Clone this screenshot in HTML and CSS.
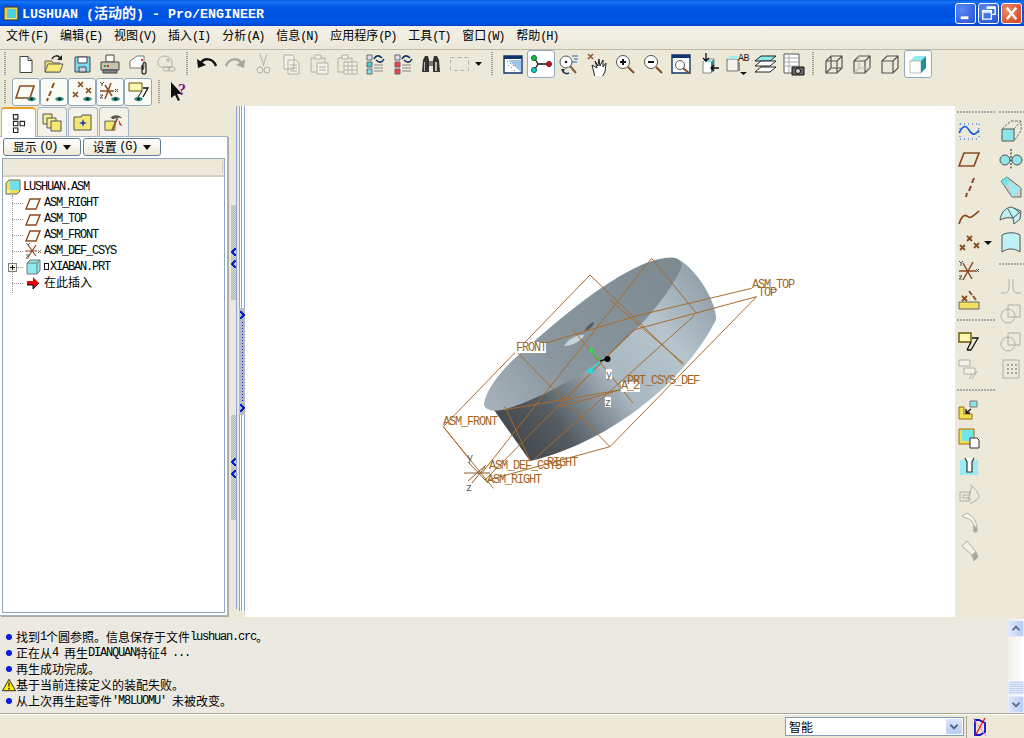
FILE: index.html
```html
<!DOCTYPE html>
<html lang="zh">
<head>
<meta charset="utf-8">
<title>LUSHUAN (活动的) - Pro/ENGINEER</title>
<link rel="stylesheet" href="styles.css">
</head>
<body>
<div class="app">
  <header class="title">
    <svg class="ti" viewBox="0 0 16 16"><path d="M1 2h14v13H1z" fill="#e8d24a" stroke="#333"/><path d="M4 4h9v9H4z" fill="#4fd0e0"/><path d="M2 13h10v1H2z" fill="#f3e88a"/></svg>
    <span class="tt"><b class="tl">LUSHUAN (</b>活动的<b class="tl">) - Pro/ENGINEER</b></span>
    <span class="wb">
      <span class="wbtn"><svg viewBox="0 0 20 20"><path d="M5 13h8v3H5z" fill="#fff"/></svg></span>
      <span class="wbtn"><svg viewBox="0 0 20 20"><path d="M8 3h9v8h-3M4 7h9v9H4zM4 8.5h9M8 4.5h9" fill="none" stroke="#fff" stroke-width="1.4"/></svg></span>
      <span class="wbtn close"><svg viewBox="0 0 20 20"><path d="M5 4l10 12M15 4L5 16" stroke="#fff" stroke-width="2.6"/></svg></span>
    </span>
  </header>
  <nav class="menu">
    <span class="mi">文件<i>(F)</i></span><span class="mi">编辑<i>(E)</i></span><span class="mi">视图<i>(V)</i></span><span class="mi">插入<i>(I)</i></span><span class="mi">分析<i>(A)</i></span><span class="mi">信息<i>(N)</i></span><span class="mi">应用程序<i>(P)</i></span><span class="mi">工具<i>(T)</i></span><span class="mi">窗口<i>(W)</i></span><span class="mi">帮助<i>(H)</i></span>
  </nav>

  <div class="tb tb1">
    <span class="grip g1"></span>
    <span class="b"><svg viewBox="0 0 24 24"><path d="M6 4.500h8l4 4v12H6z" fill="#fff" stroke="#444"/><path d="M14 4.500v4h4" fill="none" stroke="#444"/></svg></span>
    <span class="b"><svg viewBox="0 0 24 24"><path d="M3 9h7l1 2h7v9H3z" fill="#e8d86a" stroke="#666"/><path d="M3 20l3-8h15l-3 8z" fill="#f8e878" stroke="#666"/><path d="M10 7c2-4 6-4 8-1" fill="none" stroke="#222" stroke-width="1.5"/><path d="M20 3v5h-5z" fill="#222"/></svg></span>
    <span class="b"><svg viewBox="0 0 24 24"><path d="M5 5h15v15H5z" fill="#7fdcec" stroke="#445"/><path d="M8 5h9v6H8z" fill="#fff" stroke="#445"/><path d="M9 15h7v5H9z" fill="#c8d0d8" stroke="#445"/></svg></span>
    <span class="b"><svg viewBox="0 0 24 24"><path d="M8 3h8v7H8z" fill="#fff" stroke="#444"/><path d="M3 10h18v8H3z" fill="#c8c4b4" stroke="#444"/><path d="M5 18h14v3H5z" fill="#888" stroke="#444"/><path d="M6 13h2v2H6z" fill="#2a2"/><path d="M9 13h2v2H9z" fill="#d33"/></svg></span>
    <span class="b"><svg viewBox="0 0 24 24"><path d="M4 9l7-5h7v12H4z" fill="#fff" stroke="#777"/><path d="M15 7h2v2h-2z" fill="#d33"/><path d="M16 13v7a2 2 0 0 0 4 0v-8a1.500 1.500 0 0 0-3 0v6" fill="none" stroke="#222" stroke-width="1.200"/></svg></span>
    <span class="b"><svg viewBox="0 0 24 24" class="off"><path d="M4 10c0-4 4-6 7-6s7 3 7 6v5H7l-3-2z" fill="none"/><path d="M13 7h2v2h-2z"/><rect x="9" y="15" width="7" height="4" rx="2" fill="none"/><rect x="14" y="15" width="7" height="4" rx="2" fill="none"/></svg></span>
    <span class="grip g2"></span>
    <span class="b"><svg viewBox="0 0 24 24"><path d="M5 12c4-7 13-6 16 2" fill="none" stroke="#111" stroke-width="2.400"/><path d="M2 7l1 9 8-3z" fill="#111"/></svg></span>
    <span class="b"><svg viewBox="0 0 24 24"><path d="M19 12c-4-7-13-6-16 2" fill="none" stroke="#a8a89c" stroke-width="2.400"/><path d="M22 7l-1 9-8-3z" fill="#a8a89c"/></svg></span>
    <span class="b"><svg viewBox="0 0 24 24" class="off"><path d="M9 2l4 12M16 2l-4 12"/><circle cx="9" cy="18" r="3"/><circle cx="16" cy="18" r="3"/></svg></span>
    <span class="b"><svg viewBox="0 0 24 24" class="off"><path d="M5 3h8l2 2v12H5zM9 8h8l3 3v11H9z" fill="#f4f2e8"/><path d="M11 13h7M11 16h7M11 19h7"/></svg></span>
    <span class="b"><svg viewBox="0 0 24 24" class="off"><path d="M4 6h14v14H4z"/><path d="M8 3h6v4H8z" fill="#f4f2e8"/><path d="M10 11h11v11H10z" fill="#f4f2e8"/><path d="M12 15h7M12 18h7"/></svg></span>
    <span class="b"><svg viewBox="0 0 24 24" class="off"><path d="M3 6h14v14H3z"/><path d="M7 3h6v4H7z" fill="#f4f2e8"/><path d="M9 10h13v12H9z" fill="#f4f2e8"/><path d="M9 14h13M9 18h13M13 10v12M17 10v12"/></svg></span>
    <span class="b"><svg viewBox="0 0 24 24"><path d="M4 3h5v5H4z" fill="#dde" stroke="#667"/><path d="M4 10h5v5H4z" fill="#4cc" stroke="#667"/><path d="M4 17h5v5H4z" fill="#8dd" stroke="#667"/><path d="M11 13h9M11 16h9M11 19h9" stroke="#888"/><path d="M11 7c2-4 5-4 8-1M21 7c-2 4-5 4-8 1" fill="none" stroke="#136" stroke-width="1.600"/></svg></span>
    <span class="b"><svg viewBox="0 0 24 24"><path d="M4 3h5v5H4z" fill="#dde" stroke="#667"/><path d="M4 10h5v5H4z" fill="#e44" stroke="#667"/><path d="M4 17h5v5H4z" fill="#e44" stroke="#667"/><path d="M11 13h9M11 16h9M11 19h9" stroke="#888"/><path d="M11 7c2-4 5-4 8-1M21 7c-2 4-5 4-8 1" fill="none" stroke="#136" stroke-width="1.600"/></svg></span>
    <span class="b"><svg viewBox="0 0 24 24"><path d="M4 8l2-4h3l1 4v12H3z" fill="#333"/><path d="M20 8l-2-4h-3l-1 4v12h7z" fill="#333"/><path d="M10 9h4v5h-4z" fill="#777"/><path d="M5 10h1v9H5zM16 10h2v9h-2z" fill="#bbb"/></svg></span>
    <span class="b"><svg viewBox="0 0 24 24"><path d="M3.500 5.500h18v13h-18z" fill="none" stroke="#b4b4a8" stroke-dasharray="4 3"/></svg></span>
    <span class="drop"></span>
    <span class="grip g3"></span>
    <span class="b"><svg viewBox="0 0 24 24"><path d="M3 4h18v17H3z" fill="#fff" stroke="#11356a" stroke-width="1.400"/><path d="M3 4h18v3H3z" fill="#11356a"/><path d="M7 8l13 12V8z" fill="#9dc5e8"/><path d="M6 9h1v1H6zM9 11h1v1H9zM7 13h1v1H7zM10 15h1v1h-1zM12 13h1v1h-1zM13 18h1v1h-1z" fill="#4aa0d8"/></svg></span>
    <span class="b on"><svg viewBox="0 0 24 24"><path d="M9 12l-3-5M9 12l-3 5M9 12h10" stroke="#111" stroke-width="1.300"/><circle cx="5" cy="6" r="2.500" fill="#19c23a" stroke="#063"/><circle cx="5" cy="18" r="2.500" fill="#19d0e0" stroke="#063"/><circle cx="20" cy="12" r="2.500" fill="#e0101a" stroke="#611"/></svg></span>
    <span class="b"><svg viewBox="0 0 24 24"><circle cx="9" cy="10" r="6" fill="#fff" stroke="#555"/><circle cx="9" cy="10" r="1.300" fill="#222"/><path d="M13 14l6 7" stroke="#8a5a3a" stroke-width="2"/><path d="M15 4h6M17 7h4M15 10h5" stroke="#2a6aaa"/><path d="M6 19c1 3 4 3 6 2" fill="none" stroke="#235" stroke-width="1.500"/><path d="M4 17l4 0-2 4z" fill="#235"/></svg></span>
    <span class="b"><svg viewBox="0 0 24 24"><path d="M3 2l5 5M8 2L3 7" stroke="#8a4b20" stroke-width="1.300"/><path d="M7 13l5 3-2-7 3 5 1-7 1 7 3-6v7l3-4-1 9-3 5h-7z" fill="#fff" stroke="#222"/></svg></span>
    <span class="b"><svg viewBox="0 0 24 24"><circle cx="10" cy="10" r="6.500" fill="#fff" stroke="#555"/><path d="M7 10h6M10 7v6" stroke="#111" stroke-width="2"/><path d="M15 15l6 6" stroke="#8a4b20" stroke-width="2"/></svg></span>
    <span class="b"><svg viewBox="0 0 24 24"><circle cx="10" cy="10" r="6.500" fill="#fff" stroke="#555"/><path d="M7 10h6" stroke="#111" stroke-width="2"/><path d="M15 15l6 6" stroke="#8a4b20" stroke-width="2"/></svg></span>
    <span class="b"><svg viewBox="0 0 24 24"><path d="M3 3h18v18H3z" fill="#fff" stroke="#11356a" stroke-width="1.400"/><path d="M3 3h18v3H3z" fill="#11356a"/><circle cx="11" cy="13" r="4.500" fill="#fff" stroke="#555"/><path d="M14 16l6 5" stroke="#8a4b20" stroke-width="2"/></svg></span>
    <span class="b"><svg viewBox="0 0 24 24"><path d="M6 10l3-3h8v11l-3 3H6z" fill="#fff" stroke="#888"/><path d="M6 10h8V7" fill="#7fe0e8"/><path d="M14 10l3-3v11l-3 3z" fill="#1f8f98"/><path d="M9 1v7M6 6l3 3 3-3" stroke="#111" fill="none" stroke-width="1.300"/><path d="M22 16h-7M17 13l-3 3 3 3" stroke="#111" fill="none" stroke-width="1.300"/></svg></span>
    <span class="b"><svg viewBox="0 0 24 24" class="vis"><path d="M2 7h11v12H2z" fill="#f4f2ea" stroke="#777"/><path d="M2 7l3-3h8v3z" fill="#9eecef"/><path d="M13 10h2v9h-2z" fill="#888"/><text class="ab" x="13" y="9">AB</text><path d="M15 20h7l-3.500 3z" fill="#111"/></svg></span>
    <span class="b"><svg viewBox="0 0 24 24"><path d="M2 9l6-5h15l-6 5z" fill="#8ee8f0" stroke="#222"/><path d="M2 14l6-5h15l-6 5z" fill="#fff" stroke="#222"/><path d="M2 20l6-5h15l-6 5z" fill="#fff" stroke="#222"/></svg></span>
    <span class="b"><svg viewBox="0 0 24 24"><path d="M3 2h15v19H3z" fill="#fff" stroke="#555"/><path d="M3 6h15M3 10h15M3 14h15M8 2v19" stroke="#aaa"/><path d="M11 15h12v8H11z" fill="#666" stroke="#111"/><circle cx="17" cy="19" r="2.500" fill="#ddd" stroke="#111"/></svg></span>
    <span class="grip g4"></span>
    <span class="b"><svg viewBox="0 0 24 24" class="cube"><path d="M4 9l5-5h11v12l-5 5H4zM4 9h11v12M15 9l5-5M9 4v12h11M9 16l-5 5"/></svg></span>
    <span class="b"><svg viewBox="0 0 24 24" class="cube"><path d="M4 9l5-5h11v12l-5 5H4zM4 9h11v12M15 9l5-5"/><path d="M9 4v12h11M9 16l-5 5" stroke="#c0bdb0"/></svg></span>
    <span class="b"><svg viewBox="0 0 24 24" class="cube"><path d="M4 9l5-5h11v12l-5 5H4zM4 9h11v12M15 9l5-5"/></svg></span>
    <span class="b on"><svg viewBox="0 0 24 24"><path d="M4 9l5-5h11l-5 5z" fill="#8eecf0"/><path d="M4 9h11v12H4z" fill="#fff" stroke="#bbb"/><path d="M15 9l5-5v12l-5 5z" fill="#1f8f98"/></svg></span>
  </div>

  <div class="tb tb2">
    <span class="grip g1"></span>
    <span class="b card"><svg viewBox="0 0 24 24"><path d="M2 18l4-12h14l-4 12z" fill="none" stroke="#8a4b20" stroke-width="1.600"/><path d="M13 19c2-3 7-3 9 0-2 3-7 3-9 0z" fill="#2f8f80"/><circle cx="17.500" cy="19" r="1.300" fill="#111"/></svg></span>
    <span class="b card"><svg viewBox="0 0 24 24"><path d="M12 3l-2 5M9 11l-2 5M6 18l-1 3" stroke="#8a4b20" stroke-width="2"/><path d="M13 19c2-3 7-3 9 0-2 3-7 3-9 0z" fill="#2f8f80"/><circle cx="17.500" cy="19" r="1.300" fill="#111"/></svg></span>
    <span class="b card"><svg viewBox="0 0 24 24"><path d="M8 2l5 5M13 2L8 7M16 8l5 5M21 8l-5 5M3 12l5 5M8 12l-5 5" stroke="#8a4b20" stroke-width="1.600"/><path d="M13 19c2-3 7-3 9 0-2 3-7 3-9 0z" fill="#2f8f80"/><circle cx="17.500" cy="19" r="1.300" fill="#111"/></svg></span>
    <span class="b card"><svg viewBox="0 0 24 24"><path d="M2 11h14M13 3L7 19M7 5l7 11" stroke="#8a4b20" stroke-width="1.500"/><path d="M17 9l3 3M20 9l-3 3M2 2l2 2 2-2M4 4v2M2 15h3l-3 3h3" fill="none" stroke="#555"/><path d="M13 19c2-3 7-3 9 0-2 3-7 3-9 0z" fill="#2f8f80"/><circle cx="17.500" cy="19" r="1.300" fill="#111"/></svg></span>
    <span class="b card"><svg viewBox="0 0 24 24"><path d="M3 3h13v8H3z" fill="#fbf6b0" stroke="#665500"/><path d="M17 8h5l-5 9" fill="none" stroke="#111" stroke-width="1.300"/><path d="M16 11l-4 6" stroke="#111"/><path d="M8 19c2-3 7-3 9 0-2 3-7 3-9 0z" fill="#2f8f80"/><circle cx="12.500" cy="19" r="1.300" fill="#111"/></svg></span>
    <span class="grip g5"></span>
    <span class="help"><svg viewBox="0 0 24 24" class="vis"><path d="M3 2v16l4-3 3 6 2-1-3-6h5z" fill="#111"/><text class="q" x="10" y="15">?</text></svg></span>
  </div>

  <main class="work">
    <aside class="left">
      <div class="tabs">
        <span class="tab act"><svg viewBox="0 0 18 18"><path d="M4 1.500h4v4H4zM4 7.500h4v4H4zM10 7.500h4v4h-4zM4 13.500h4v4H4z" fill="none" stroke="#222"/></svg></span>
        <span class="tab"><svg viewBox="0 0 20 20"><path d="M1 2h9v10H1z" fill="#f4ee90" stroke="#555"/><path d="M5 6h9v10H5z" fill="#f4ee90" stroke="#555"/><path d="M9 9h10v10H9z" fill="#f4e870" stroke="#555"/></svg></span>
        <span class="tab"><svg viewBox="0 0 20 20"><path d="M1 5h7l1-2h9v15H1z" fill="#f4e870" stroke="#555"/><path d="M10 7l1 3 3 1-3 1-1 3-1-3-3-1 3-1z" fill="#1a3ac8"/></svg></span>
        <span class="tab"><svg viewBox="0 0 22 20"><path d="M1 9h11v10H1z" fill="#f4e870" stroke="#555"/><path d="M7 5c5-4 10-3 13 1l-5-1-5 2z" fill="#555"/><path d="M15 5l-6 14" stroke="#8a5a30" stroke-width="2"/><path d="M16 7l4 8-3-2z" fill="#c22"/></svg></span>
      </div>
      <div class="panel">
        <div class="btns">
          <span class="pb">显示 <i>(O)</i><em></em></span>
          <span class="pb">设置 <i>(G)</i><em></em></span>
        </div>
        <div class="treebox">
          <div class="thead"><span></span></div>
          <ul class="tree">
            <li class="root"><svg class="ic" viewBox="0 0 16 16"><path d="M1 4l3-3h11v11l-3 3H1z" fill="#f1de5c" stroke="#666"/><path d="M5 2h9v9H5z" fill="#6fe0ea"/><path d="M2 11h3v3H2z" fill="#fff7a0"/></svg><span class="l">LUSHUAN.ASM</span></li>
            <li><svg class="ic" viewBox="0 0 16 16"><path d="M1 14L5 4h10l-4 10z" fill="none" stroke="#8a4b20" stroke-width="1.400"/></svg><span class="l">ASM_RIGHT</span></li>
            <li><svg class="ic" viewBox="0 0 16 16"><path d="M1 14L5 4h10l-4 10z" fill="none" stroke="#8a4b20" stroke-width="1.400"/></svg><span class="l">ASM_TOP</span></li>
            <li><svg class="ic" viewBox="0 0 16 16"><path d="M1 14L5 4h10l-4 10z" fill="none" stroke="#8a4b20" stroke-width="1.400"/></svg><span class="l">ASM_FRONT</span></li>
            <li><svg class="ic" viewBox="0 0 16 16"><path d="M0 8h12M11 2L3 14M3 2l8 11" stroke="#8a4b20" stroke-width="1.200"/><path d="M13 7l3 3M16 7l-3 3M1 0l2 2 2-2M1 12h3l-3 3h3" fill="none" stroke="#666"/></svg><span class="l">ASM_DEF_CSYS</span></li>
            <li class="exp"><span class="plus"></span><svg class="ic" viewBox="0 0 16 16"><path d="M2 4l3-3h10v11l-3 3H2z" fill="#8feaf0" stroke="#777"/><path d="M2 4h10v11M12 4l3-3" fill="none" stroke="#777"/></svg><span class="l"><span class="sq"></span>XIABAN.PRT</span></li>
            <li><svg class="ic" viewBox="0 0 16 16"><path d="M2 6h6V2l6 6-6 6v-4H2z" fill="#e00"/><path d="M2 10h6v4l6-6" fill="none" stroke="#111"/></svg><span class="ins">在此插入</span></li>
          </ul>
        </div>
      </div>
    </aside>

    <div class="sash">
      <div class="grips">
        <span class="grp gr1"><u></u><u></u></span>
        <span class="grp gr2"><u></u><u></u></span>
      </div>
      <div class="line1"></div>
      <div class="lines">
        <div class="ln top"></div>
        <div class="ln mid"><u class="r"></u><b></b><u class="r"></u></div>
        <div class="ln bot"></div>
      </div>
    </div>

    <section class="view">
      <svg class="model" viewBox="245 106 710 511">
        <defs>
          <linearGradient id="body" gradientUnits="userSpaceOnUse" x1="500" y1="460" x2="720" y2="290">
            <stop offset="0" stop-color="#3b3f43"/>
            <stop offset=".25" stop-color="#555d63"/>
            <stop offset=".5" stop-color="#a9b7c0"/>
            <stop offset=".75" stop-color="#b6c4cd"/>
            <stop offset="1" stop-color="#8d9ca6"/>
          </linearGradient>
          <linearGradient id="face" gradientUnits="userSpaceOnUse" x1="490" y1="400" x2="680" y2="260">
            <stop offset="0" stop-color="#a3b0b9"/>
            <stop offset=".3" stop-color="#8b979f"/>
            <stop offset="1" stop-color="#7e8a91"/>
          </linearGradient>
        </defs>
        <path d="M494 410L530 461C600 445 680 390 716 320 C 717 305 700 272 678 259 L600 300Z" fill="url(#body)"/>
        <path d="M484 404C486 388 505 365 530 345C575 305 630 262 665 258C676 256 681 259 682 266C668 300 625 345 590 368C560 388 505 415 490 410C486 409 484 407 484 404Z" fill="url(#face)"/>
        <path d="M564 346C570 336 580 335 584 335C582 341 572 346 564 346Z" fill="#c8d2d8"/>
        <path d="M584 331C588 325 592 322 594 322C594 326 588 331 584 331Z" fill="#555c62"/>
        <g transform="translate(430 250) scale(.33333)" class="dat">
          <path d="M480 75L40 530L190 715M480 75L760 345M665 25L155 670M665 25L800 190M795 195L310 630M980 140L610 240L165 690M980 140L540 590L175 690M260 305L630 195L965 115M260 305L540 590M430 240L610 460M540 150L760 340M570 420L220 480M570 420L390 470M225 470L300 630M40 530L120 630M600 250L385 470"/>
        </g>
        <path d="M591 351L600 360" stroke="#2fd05a" stroke-width="1.500"/>
        <path d="M600 361L592 370" stroke="#2ccfd8" stroke-width="1.500"/>
        <path d="M600 361L607 359" stroke="#111" stroke-width="1.500"/>
        <circle cx="591" cy="350" r="2.200" fill="#2fe04a"/>
        <circle cx="590.500" cy="371" r="2.500" fill="#18e0e8"/>
        <circle cx="607.500" cy="359" r="3" fill="#000"/>
        <g transform="translate(476 473)" class="cs"><path d="M-7-10L12 10M-8 8L10-8M-4 10L9-6M-12 0H14"/></g>
        <rect class="lbg" x="515" y="342" width="31" height="11"/>
        <rect class="lbg" x="606" y="369" width="6" height="10"/>
        <rect class="lbg" x="605" y="397" width="6" height="10"/>
        <rect class="lbg" x="621" y="382" width="19" height="10"/>
        <text class="lb" x="752" y="288">ASM_TOP</text>
        <text class="lb" x="758" y="296">TOP</text>
        <text class="lb" x="516" y="351">FRONT</text>
        <text class="lb" x="627" y="384">PRT_CSYS_DEF</text>
        <text class="lb" x="621" y="389">A_2</text>
        <text class="lb" x="443" y="425">ASM_FRONT</text>
        <text class="lb" x="489" y="469">ASM_DEF_CSYS</text>
        <text class="lb" x="547" y="466">RIGHT</text>
        <text class="lb" x="487" y="483">ASM_RIGHT</text>
        <text class="ax" x="606" y="378">y</text>
        <text class="ax" x="605" y="406">z</text>
        <text class="ax" x="467" y="461">y</text>
        <text class="ax" x="466" y="491">z</text>
      </svg>
    </section>

    <aside class="right">
      <div class="col">
        <span class="rsep s1"></span>
        <span class="b"><svg viewBox="0 0 24 24"><path d="M3 5h19M3 20h19M3 5v15M22 5v15" stroke="#1560e0" stroke-dasharray="1 3" fill="none"/><path d="M2 14c4-8 7-8 10-3s6 6 10 0" fill="none" stroke="#1560e0" stroke-width="1.600"/></svg></span>
        <span class="b"><svg viewBox="0 0 24 24"><path d="M2 19l5-13h15l-5 13z" fill="none" stroke="#8a4b20" stroke-width="1.700"/></svg></span>
        <span class="b"><svg viewBox="0 0 24 24"><path d="M17 3l-2 5M14 11l-2 5M10 18l-1 4" stroke="#8a4b20" stroke-width="2"/></svg></span>
        <span class="b"><svg viewBox="0 0 24 24"><path d="M2 21c2-7 5-10 8-8 3 3 5 1 12-5" fill="none" stroke="#8a4b20" stroke-width="1.700"/></svg></span>
        <span class="b"><svg viewBox="0 0 24 24"><path d="M10 5l5 5M15 5l-5 5M17 12l5 5M22 12l-5 5M3 14l5 5M8 14l-5 5" stroke="#8a4b20" stroke-width="1.800"/></svg><span class="ra"></span></span>
        <span class="b"><svg viewBox="0 0 24 24"><path d="M2 12h17M16 3L6 21M6 4l9 16" stroke="#8a4b20" stroke-width="1.500"/><path d="M19 10l3 3M22 10l-3 3M2 2l2 2 2-2M4 4v3M2 17h3l-3 3h3" fill="none" stroke="#555"/></svg></span>
        <span class="b"><svg viewBox="0 0 24 24"><path d="M5 9l5 5M10 9l-5 5M12 4l3 4M16 9l3 4" stroke="#8a4b20" stroke-width="1.800"/><path d="M2 15h20v7H2z" fill="#f0e060" stroke="#666"/></svg></span>
        <span class="rsep s2"></span>
        <span class="b"><svg viewBox="0 0 24 24"><path d="M2 4h12v9H2z" fill="#fbf6b0" stroke="#665500" stroke-width="1.400"/><path d="M15 9h6l-7 12M14 13l-4 8M10 21h4" fill="none" stroke="#111" stroke-width="1.300"/></svg></span>
        <span class="b"><svg viewBox="0 0 24 24" class="off"><path d="M2 3h11v6H2zM7 11h11v6H7zM15 17l-3 5M20 14l-5 8" fill="#f4f2e8"/></svg></span>
        <span class="rsep s3"></span>
        <span class="b"><svg viewBox="0 0 24 24"><path d="M2 9h5v7h8v5H2z" fill="#f0e050" stroke="#a06a10"/><path d="M13 3h7v6h-7z" fill="#8fe5ea" stroke="#777"/><path d="M14 11l-5 4M9 11v4h4" stroke="#111" fill="none" stroke-width="1.300"/></svg></span>
        <span class="b"><svg viewBox="0 0 24 24"><path d="M2 3h15v15H2z" fill="#f0e050" stroke="#a06a10"/><path d="M5 4h11v11H5z" fill="#6fe4ea"/><path d="M13 12h7l2 2v8h-9z" fill="#fff" stroke="#333"/></svg></span>
        <span class="b"><svg viewBox="0 0 24 24"><path d="M3 6h18v15H3z" fill="#9eeaf4"/><path d="M8 4l2 4v10h5V8l2-4" fill="#fff" stroke="#333" stroke-width="1.200"/></svg></span>
        <span class="b"><svg viewBox="0 0 24 24" class="off"><path d="M3 10h10v3H6v3h7v3H3zM13 3c6 3 9 9 9 13l-7 5H13M15 4l-4 14"/></svg></span>
        <span class="b"><svg viewBox="0 0 24 24" class="off"><path d="M5 6l5-3c6 3 10 9 10 15l-3 4v-6C16 11 12 8 8 8z" fill="#f4f2e8"/><path d="M17 16l3 2v4l-3 0z" fill="#a8a89c"/></svg></span>
        <span class="b"><svg viewBox="0 0 24 24" class="off"><path d="M5 8l5-5 9 11-4 3z" fill="#f4f2e8"/><path d="M15 17l4-3 2 5-4 4z" fill="#a8a89c"/></svg></span>
      </div>
      <div class="col">
        <span class="rsep s1"></span>
        <span class="b"><svg viewBox="0 0 24 24"><path d="M3 10h12v12H3z" fill="#8fe5ea" stroke="#555"/><path d="M3 10l9-8h10v10l-7 10M15 10l7-8" fill="none" stroke="#777" stroke-dasharray="3 1"/></svg></span>
        <span class="b"><svg viewBox="0 0 24 24"><circle cx="6" cy="13" r="5" fill="#8fe5ea" stroke="#555"/><circle cx="18" cy="13" r="5" fill="#8fe5ea" stroke="#555"/><path d="M12 2v21" stroke="#111" stroke-dasharray="2 1.500"/></svg></span>
        <span class="b"><svg viewBox="0 0 24 24"><path d="M2 6l6-4 14 11v9H13z" fill="#cfd0cc" stroke="#666"/><path d="M2 6l6-4 4 6-6 3z" fill="#6fe4ea"/><path d="M8 6l14 7-9 9z" fill="#9eeaf0"/></svg></span>
        <span class="b"><svg viewBox="0 0 24 24"><path d="M1 17c1-7 5-12 11-13l10 4-1 8-6 5-1-6c-5-1-9 0-13 2z" fill="#bff0f4" stroke="#555"/><path d="M14 15l6-5M9 6l5 9M15 5l6 5" stroke="#555"/></svg></span>
        <span class="b"><svg viewBox="0 0 24 24"><path d="M3 4c5-3 13-3 18 0v17c-5-4-13-4-18 0z" fill="#bff0f4" stroke="#555"/></svg></span>
        <span class="rsep s4"></span>
        <span class="b"><svg viewBox="0 0 24 24" class="off"><path d="M2 20h5c2-1 3-3 3-6V6M22 20h-5c-2-1-3-3-3-6V6"/></svg></span>
        <span class="b"><svg viewBox="0 0 24 24" class="off"><circle cx="9" cy="15" r="7"/><path d="M9 4h12v12H9z"/></svg></span>
        <span class="b"><svg viewBox="0 0 24 24" class="off"><circle cx="9" cy="15" r="7"/><path d="M9 4h12v12H9z"/></svg></span>
        <span class="b"><svg viewBox="0 0 24 24" class="off"><path d="M4 3h16v18H4z"/><path d="M8 7h2v2H8zM12 7h2v2h-2zM16 7h2v2h-2zM8 11h2v2H8zM12 11h2v2h-2zM16 11h2v2h-2zM8 15h2v2H8zM12 15h2v2h-2zM16 15h2v2h-2z" stroke="none" fill="#a8a89c"/></svg></span>
      </div>
    </aside>
  </main>

  <section class="msgs">
    <div class="log">
      <p><span class="dot"></span>找到<span class="l">1</span>个圆参照。信息保存于文件<span class="l">lushuan.crc</span>。</p>
      <p><span class="dot"></span>正在从<span class="l">4 </span>再生<span class="l">DIANQUAN</span>特征<span class="l">4 ...</span></p>
      <p><span class="dot"></span>再生成功完成。</p>
      <p><svg class="warn" viewBox="0 0 16 14"><path d="M8 .5L15.500 13.500H.5z" fill="#fff200" stroke="#111"/><path d="M7.200 4h1.600l-.3 5h-1zM7.200 10h1.600v2H7.200z" fill="#111"/></svg>基于当前连接定义的装配失败。</p>
      <p><span class="dot"></span>从上次再生起零件<span class="l">'M8LUOMU' </span>未被改变。</p>
    </div>
    <div class="scroll">
      <span class="sb"><svg viewBox="0 0 16 16"><path d="M4 10l4-4 4 4" fill="none" stroke="#4d6185" stroke-width="2"/></svg></span>
      <span class="track"></span>
      <span class="thumb"></span>
      <span class="sb"><svg viewBox="0 0 16 16"><path d="M4 6l4 4 4-4" fill="none" stroke="#4d6185" stroke-width="2"/></svg></span>
    </div>
  </section>

  <footer class="status">
    <div class="combo"><span>智能</span><span class="cb"><svg viewBox="0 0 16 16"><path d="M4 6l4 4 4-4" fill="none" stroke="#4d6185" stroke-width="2"/></svg></span></div>
    <span class="sdiv"></span>
    <svg class="filter" viewBox="0 0 14 20"><path d="M2 3h4l6 3v9l-5 3H2z" fill="none" stroke="#1010d0" stroke-width="1.800"/><path d="M0 1l13 18" stroke="#ff80c8"/><path d="M12 1L2 19" stroke="#e00010" stroke-width="1.200"/></svg>
  </footer>
</div>
</body>
</html>
```
FILE: styles.css
```css
* { box-sizing: border-box; }
html, body { margin: 0; padding: 0; }
body {
  width: 1024px;
  height: 738px;
  overflow: hidden;
  background: #ece9d8;
  color: #000;
  font: 12px/16px "Noto Sans CJK SC", "Liberation Sans", sans-serif;
}
.app { width: 1024px; height: 738px; display: flex; flex-direction: column; overflow: hidden; }
i { font-style: normal; font-family: "Liberation Mono", monospace; letter-spacing: -1.2px; }
.l { font-family: "Liberation Mono", monospace; letter-spacing: -1.2px; }
svg { display: block; }
svg.vis { overflow: visible; }

/* title bar */
.title {
  height: 26px;
  flex: none;
  display: flex;
  align-items: center;
  padding-left: 3px;
  background: linear-gradient(#0059e0 0, #1a78f2 2px, #0a62ec 4px, #0055e5 9px, #0053e0 60%, #0058ec 85%, #0044c8 100%);
  color: #fff;
  font: bold 14px/16px "Noto Sans CJK SC", sans-serif;
}
.ti { width: 16px; height: 16px; margin-right: 3px; }
.tt { white-space: pre; }
.tl { font: bold 13.34px/16px "Liberation Mono", monospace; }
.wb { margin-left: auto; display: flex; gap: 2px; padding: 0 2px 0 0; }
.wbtn {
  width: 21px; height: 21px; border: 1px solid #fff; border-radius: 3px;
  background: radial-gradient(circle at 30% 30%, #5b8af0, #2250d8);
}
.wbtn.close { background: radial-gradient(circle at 30% 30%, #ec8a68, #d4401c); }

/* menu */
.menu {
  height: 24px;
  flex: none;
  display: flex;
  align-items: center;
  padding-bottom: 3px;
  background: linear-gradient(#f2f0e6, #ebe8da);
  border-bottom: 1px solid #bdbaa8;
}
.mi { padding: 0 6px; white-space: pre; }

/* toolbars */
.tb { height: 28px; flex: none; display: flex; align-items: center; }
.b {
  position: relative;
  width: 28px; height: 28px; flex: none;
  display: flex; align-items: center; justify-content: center;
}
.b svg { width: 24px; height: 24px; }
.b.on, .b.card {
  background: #fff;
  border: 1px solid #90a9c0;
  border-radius: 3px;
}
.b.card { background: #fbfbf6; }
.grip {
  flex: none; width: 2px; height: 24px;
  background: repeating-linear-gradient(#9a9a8e 0 1px, transparent 1px 2px);
}
.g1 { margin: 0 6px 0 4px; }
.g2 { margin: 0 5px 0 6px; }
.g3 { margin: 0 6px; }
.g4 { margin: 0 6px 0 5px; }
.g5 { margin: 0 0 0 6px; }
.drop {
  width: 12px; height: 4px; flex: none;
  background: linear-gradient(#111, #111);
  clip-path: polygon(2px 0, 9px 0, 5.5px 100%);
}
.help { width: 24px; height: 24px; margin-left: 8px; }
.off { fill: none; stroke: #b0b0a4; stroke-width: 1; }
.cube { fill: none; stroke: #555; stroke-width: 1.2; }
.ab { font: 10px "Liberation Mono", monospace; fill: #222; letter-spacing: -.5px; }
.q { font: bold 16px "Liberation Serif", serif; fill: #80108a; }

/* workspace */
.work { height: 511px; flex: none; display: flex; }
.left { width: 228px; flex: none; display: flex; flex-direction: column; }
.tabs { height: 30px; flex: none; display: flex; gap: 1px; padding: 1px 0 0 1px; }
.tab {
  width: 30px; height: 29px;
  display: flex; align-items: center; justify-content: center;
  background: #f4f2e8;
  border: 1px solid #a4b5c6;
  border-bottom: 0;
  border-radius: 4px 4px 0 0;
}
.tab svg { width: 20px; height: 20px; }
.tab.act { width: 35px; background: #fff; border-top: 2px solid #f0a020; margin-right: 0; height: 30px; position: relative; z-index: 1; }
.panel {
  height: 480px;
  background: #fff;
  border: 1px solid #a4b5c6;
  border-left: 0;
  box-shadow: 1px 1px 0 #aaa;
  padding: 1px 2px 2px 2px;
  display: flex; flex-direction: column;
}
.btns { height: 20px; flex: none; display: flex; gap: 2px; padding-left: 1px; }
.pb {
  width: 78px; height: 18px;
  display: flex; align-items: center; justify-content: center;
  background: linear-gradient(#fff, #ece9d8);
  border: 1px solid #5f7e96;
  border-radius: 3px;
  white-space: pre;
}
.pb em {
  width: 0; height: 0; margin-left: 6px;
  border: 4px solid transparent; border-top: 5px solid #111; border-bottom: 0;
}
.treebox { flex: 1; border: 1px solid #8fa8bd; display: flex; flex-direction: column; min-height: 0; }
.thead { height: 18px; flex: none; background: #ece9d8; border-bottom: 2px solid #d6d3c4; padding: 2px 1px 0 0; display: flex; justify-content: flex-end; }
.thead span { width: 1px; height: 12px; background: #cfccbc; }
.tree { position: relative; list-style: none; margin: 0; padding: 2px 0 0 2px; }
.tree::before {
  content: ""; position: absolute; left: 9px; top: 18px; height: 98px; width: 0;
  border-left: 1px dotted #9a9a9a;
}
.tree li { position: relative; height: 16px; display: flex; align-items: center; padding-left: 20px; white-space: nowrap; }
.tree li.root { padding-left: 0; }
.tree li.root .ic { margin-right: 2px; width: 16px; height: 16px; }
.tree li:not(.root)::before {
  content: ""; position: absolute; left: 7px; top: 8px; width: 11px; border-top: 1px dotted #9a9a9a;
}
.ic { width: 16px; height: 16px; flex: none; margin-right: 3px; position: relative; z-index: 1; }
.tree li.exp::before { left: 12px; width: 6px; }
.ins { margin-top: -3px; }
.plus {
  position: absolute; left: 3px; top: 4px; width: 9px; height: 9px; z-index: 2;
  border: 1px solid #808080; background:
    linear-gradient(#111, #111) center / 5px 1px no-repeat,
    linear-gradient(#111, #111) center / 1px 5px no-repeat, #f4f2e8;
}
.sq { display: inline-block; width: 5px; height: 7px; border: 1px solid #111; margin-right: 1px; }

/* sash */
.sash { width: 17px; flex: none; display: flex; padding-left: 3px; }
.grips { width: 5px; flex: none; padding-top: 99px; display: flex; flex-direction: column; }
.grp {
  display: flex; flex-direction: column; justify-content: center; gap: 4px;
  background: repeating-conic-gradient(#b4b4b0 0 25%, #d8d8d2 0 50%) 0 0 / 2px 2px;
}
.gr1 { height: 95px; margin-bottom: 115px; padding-top: 11px; }
.gr2 { height: 105px; }
.grp u { display: block; width: 5px; height: 8px; background: linear-gradient(to bottom right, transparent 40%, #0a1ed0 40% 75%, transparent 75%) 0 0 / 100% 50% no-repeat, linear-gradient(to top right, transparent 40%, #0a1ed0 40% 75%, transparent 75%) 0 100% / 100% 50% no-repeat; }
.line1 { width: 1px; flex: none; height: 503px; background: #8aa4dc; }
.lines { width: 8px; flex: none; margin-left: 2px; display: flex; flex-direction: column; }
.ln { width: 6px; background: linear-gradient(to right, #8aa4dc 0 1px, #fff 1px 2px, #8aa4dc 2px 3px, #fff 3px 5px, #8aa4dc 5px 6px); }
.top { height: 202px; }
.mid { height: 107px; background: #b6bac6; display: flex; flex-direction: column; align-items: center; justify-content: space-between; padding: 3px 0; }
.mid b { flex: 1; width: 1px; margin: 3px 0; background: repeating-linear-gradient(#0a1ed0 0 1px, transparent 1px 3px); }
.mid u { display: block; width: 5px; height: 8px; background: linear-gradient(to bottom left, transparent 40%, #0a1ed0 40% 75%, transparent 75%) 0 0 / 100% 50% no-repeat, linear-gradient(to top left, transparent 40%, #0a1ed0 40% 75%, transparent 75%) 0 100% / 100% 50% no-repeat; }
.bot { height: 196px; }

/* viewport */
.view { width: 710px; flex: none; background: #fff; overflow: hidden; }
.model { width: 710px; height: 511px; }
.dat path { fill: none; stroke: #a86a2c; stroke-width: 3; }
.cs path { fill: none; stroke: #8a5a28; stroke-width: 1; }
.lbg { fill: #fff; }
.lb { font: 12px "Liberation Mono", monospace; letter-spacing: -1.2px; fill: #a3661f; }
.ax { font: 10px "Liberation Mono", monospace; fill: #555; }

/* right toolbars */
.right { width: 69px; flex: none; display: flex; padding-left: 0; }
.col { display: flex; flex-direction: column; align-items: center; }
.col:first-child { width: 40px; padding-left: 0; align-items: flex-start; }
.col:last-child { width: 29px; padding-left: 1px; align-items: flex-start; margin-left: 1px; }
.rsep { width: 38px; flex: none; background: repeating-linear-gradient(to right, #aaa 0 2px, transparent 2px 3px) center / 100% 2px no-repeat; }
.col:last-child .rsep { width: 26px; }
.col .rsep { margin-left: 2px; }
.s1 { height: 11px; }
.s2 { height: 14px; }
.s3 { height: 13px; }
.s4 { height: 14px; }
.ra {
  position: absolute; left: 29px; top: 12px; width: 0; height: 0;
  border: 4px solid transparent; border-top: 4px solid #111; border-bottom: 0;
}

/* messages */
.msgs {
  height: 95px; flex: none; margin-top: 2px;
  display: flex;
  background: #ebe9e1;
  border-bottom: 1px solid #aca899;
}
.log { flex: 1; padding-top: 10px; }
.log p { margin: 0; height: 16px; display: flex; align-items: center; padding-left: 16px; position: relative; white-space: pre; }
.dot { position: absolute; left: 6px; top: 5px; width: 6px; height: 6px; border-radius: 50%; background: #1018e0; }
.warn { position: absolute; left: 2px; top: 1px; width: 14px; height: 14px; }
.scroll { width: 16px; flex: none; display: flex; flex-direction: column; background: linear-gradient(to right, #f3f1e8, #fff); }
.sb {
  width: 16px; height: 17px; flex: none; border: 1px solid #e4ecfb; border-radius: 2px;
  background: linear-gradient(to right, #dbe6fb, #b9ccf3);
}
.sb svg { width: 14px; height: 15px; }
.track { flex: 1; }
.thumb { height: 14px; flex: none; margin-bottom: 1px; border: 1px solid #e4ecfb; border-radius: 2px;
  background: repeating-linear-gradient(#b9ccf3 0 1px, #e8eefb 1px 2px); }
.scroll .sb:first-child { margin-top: 1px; }

/* status */
.status { flex: 1; display: flex; align-items: center; padding-left: 785px; border-top: 1px solid #fff; }
.combo {
  width: 179px; height: 19px; background: #fff; border: 1px solid #7f9db9;
  display: flex; align-items: center; justify-content: space-between; padding-left: 3px;
}
.cb { width: 16px; height: 15px; margin-right: 1px; background: linear-gradient(#dbe6fb, #b9ccf3); border-radius: 2px; }
.cb svg { width: 16px; height: 15px; }
.sdiv { width: 1px; height: 22px; background: #aca899; margin-left: 2px; }
.filter { width: 14px; height: 20px; margin-left: 6px; }
```
